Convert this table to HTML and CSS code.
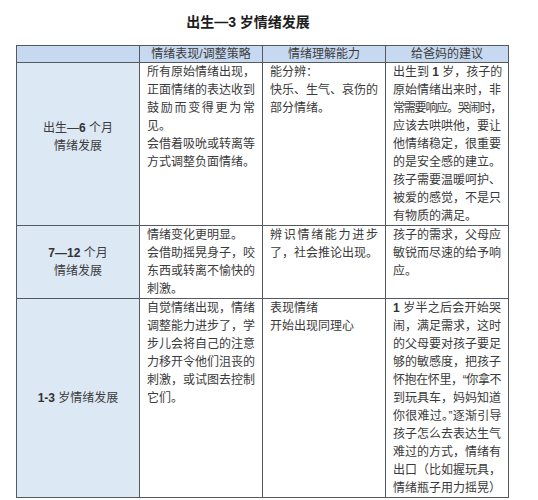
FILE: index.html
```html
<!DOCTYPE html>
<html lang="zh-CN">
<head>
<meta charset="utf-8">
<title>出生—3 岁情绪发展</title>
<link rel="stylesheet" href="styles.css">
</head>
<body>
<h1 class="title">出生—3 岁情绪发展</h1>
<table class="grid">
  <colgroup><col><col><col><col></colgroup>
  <thead>
    <tr>
      <th class="head"></th>
      <th class="head">情绪表现/调整策略</th>
      <th class="head">情绪理解能力</th>
      <th class="head">给爸妈的建议</th>
    </tr>
  </thead>
  <tbody>
    <tr>
      <td class="label label-up">出生—<span class="n">6</span> 个月<br>情绪发展</td>
      <td class="cell">
        <span class="l">所有原始情绪出现，</span>
        <span class="l">正面情绪的表达收到</span>
        <span class="l">鼓励而变得更为常</span>
        <span class="l e">见。</span>
        <span class="l">会借着吸吮或转离等</span>
        <span class="l">方式调整负面情绪。</span>
      </td>
      <td class="cell">
        <span class="l e">能分辨：</span>
        <span class="l">快乐、生气、哀伤的</span>
        <span class="l e">部分情绪。</span>
      </td>
      <td class="cell">
        <span class="l">出生到 <b class="n">1</b> 岁，孩子的</span>
        <span class="l">原始情绪出来时，非</span>
        <span class="l tight">常需要响应。哭闹时，</span>
        <span class="l">应该去哄哄他，要让</span>
        <span class="l">他情绪稳定，很重要</span>
        <span class="l">的是安全感的建立。</span>
        <span class="l">孩子需要温暖呵护、</span>
        <span class="l">被爱的感觉，不是只</span>
        <span class="l e">有物质的满足。</span>
      </td>
    </tr>
    <tr>
      <td class="label"><span class="n">7—12</span> 个月<br>情绪发展</td>
      <td class="cell">
        <span class="l e">情绪变化更明显。</span>
        <span class="l">会借助摇晃身子，咬</span>
        <span class="l">东西或转离不愉快的</span>
        <span class="l e">刺激。</span>
      </td>
      <td class="cell">
        <span class="l">辨识情绪能力进步</span>
        <span class="l">了，社会推论出现。</span>
      </td>
      <td class="cell">
        <span class="l">孩子的需求，父母应</span>
        <span class="l">敏锐而尽速的给予响</span>
        <span class="l e">应。</span>
      </td>
    </tr>
    <tr>
      <td class="label"><span class="n">1-3</span> 岁情绪发展</td>
      <td class="cell">
        <span class="l">自觉情绪出现，情绪</span>
        <span class="l">调整能力进步了，学</span>
        <span class="l">步儿会将自己的注意</span>
        <span class="l">力移开令他们沮丧的</span>
        <span class="l">刺激，或试图去控制</span>
        <span class="l e">它们。</span>
      </td>
      <td class="cell">
        <span class="l e">表现情绪</span>
        <span class="l e">开始出现同理心</span>
      </td>
      <td class="cell">
        <span class="l"><b class="n">1</b> 岁半之后会开始哭</span>
        <span class="l">闹，满足需求，这时</span>
        <span class="l">的父母要对孩子要足</span>
        <span class="l">够的敏感度，把孩子</span>
        <span class="l semi">怀抱在怀里，“你拿不</span>
        <span class="l">到玩具车，妈妈知道</span>
        <span class="l semi">你很难过。”逐渐引导</span>
        <span class="l">孩子怎么去表达生气</span>
        <span class="l">难过的方式，情绪有</span>
        <span class="l">出口（比如握玩具，</span>
        <span class="l">情绪瓶子用力摇晃）</span>
      </td>
    </tr>
  </tbody>
</table>
</body>
</html>
```

FILE: styles.css
```css
html, body {
  margin: 0;
  padding: 0;
  background: #ffffff;
}

body {
  font-family: "Liberation Sans", "Noto Sans CJK SC", sans-serif;
  color: #3a3a3a;
  padding-top: 12px;
}

.title {
  margin: 0;
  padding-right: 42px;
  font-size: 14px;
  line-height: 20px;
  font-weight: bold;
  color: #1e1e1e;
  text-align: center;
}

.grid {
  margin: 13px 0 0 16px;
  border-collapse: collapse;
  table-layout: fixed;
  width: 493px;
  font-size: 12px;
}

.grid col {
  width: 25%;
}

.head,
.label,
.cell {
  border: 1px solid #555a60;
  padding: 0 7px;
}

.head {
  background: #c6d9f0;
  height: 16px;
  line-height: 16px;
  font-weight: normal;
  text-align: center;
  color: #3c3c3c;
}

.label {
  background: #dde8f5;
  text-align: center;
  vertical-align: middle;
  line-height: 18px;
  color: #3c3c3c;
}

.label-up {
  padding-bottom: 14px;
}

.n {
  font-weight: bold;
  color: #333;
}

.cell {
  vertical-align: top;
  line-height: 18px;
  background: #ffffff;
}

.l {
  display: block;
  white-space: nowrap;
  text-align: justify;
  text-align-last: justify;
}

.l.e {
  text-align: left;
  text-align-last: left;
}

.tight {
  letter-spacing: -1.2px;
}

.semi {
  letter-spacing: -0.5px;
}
```
